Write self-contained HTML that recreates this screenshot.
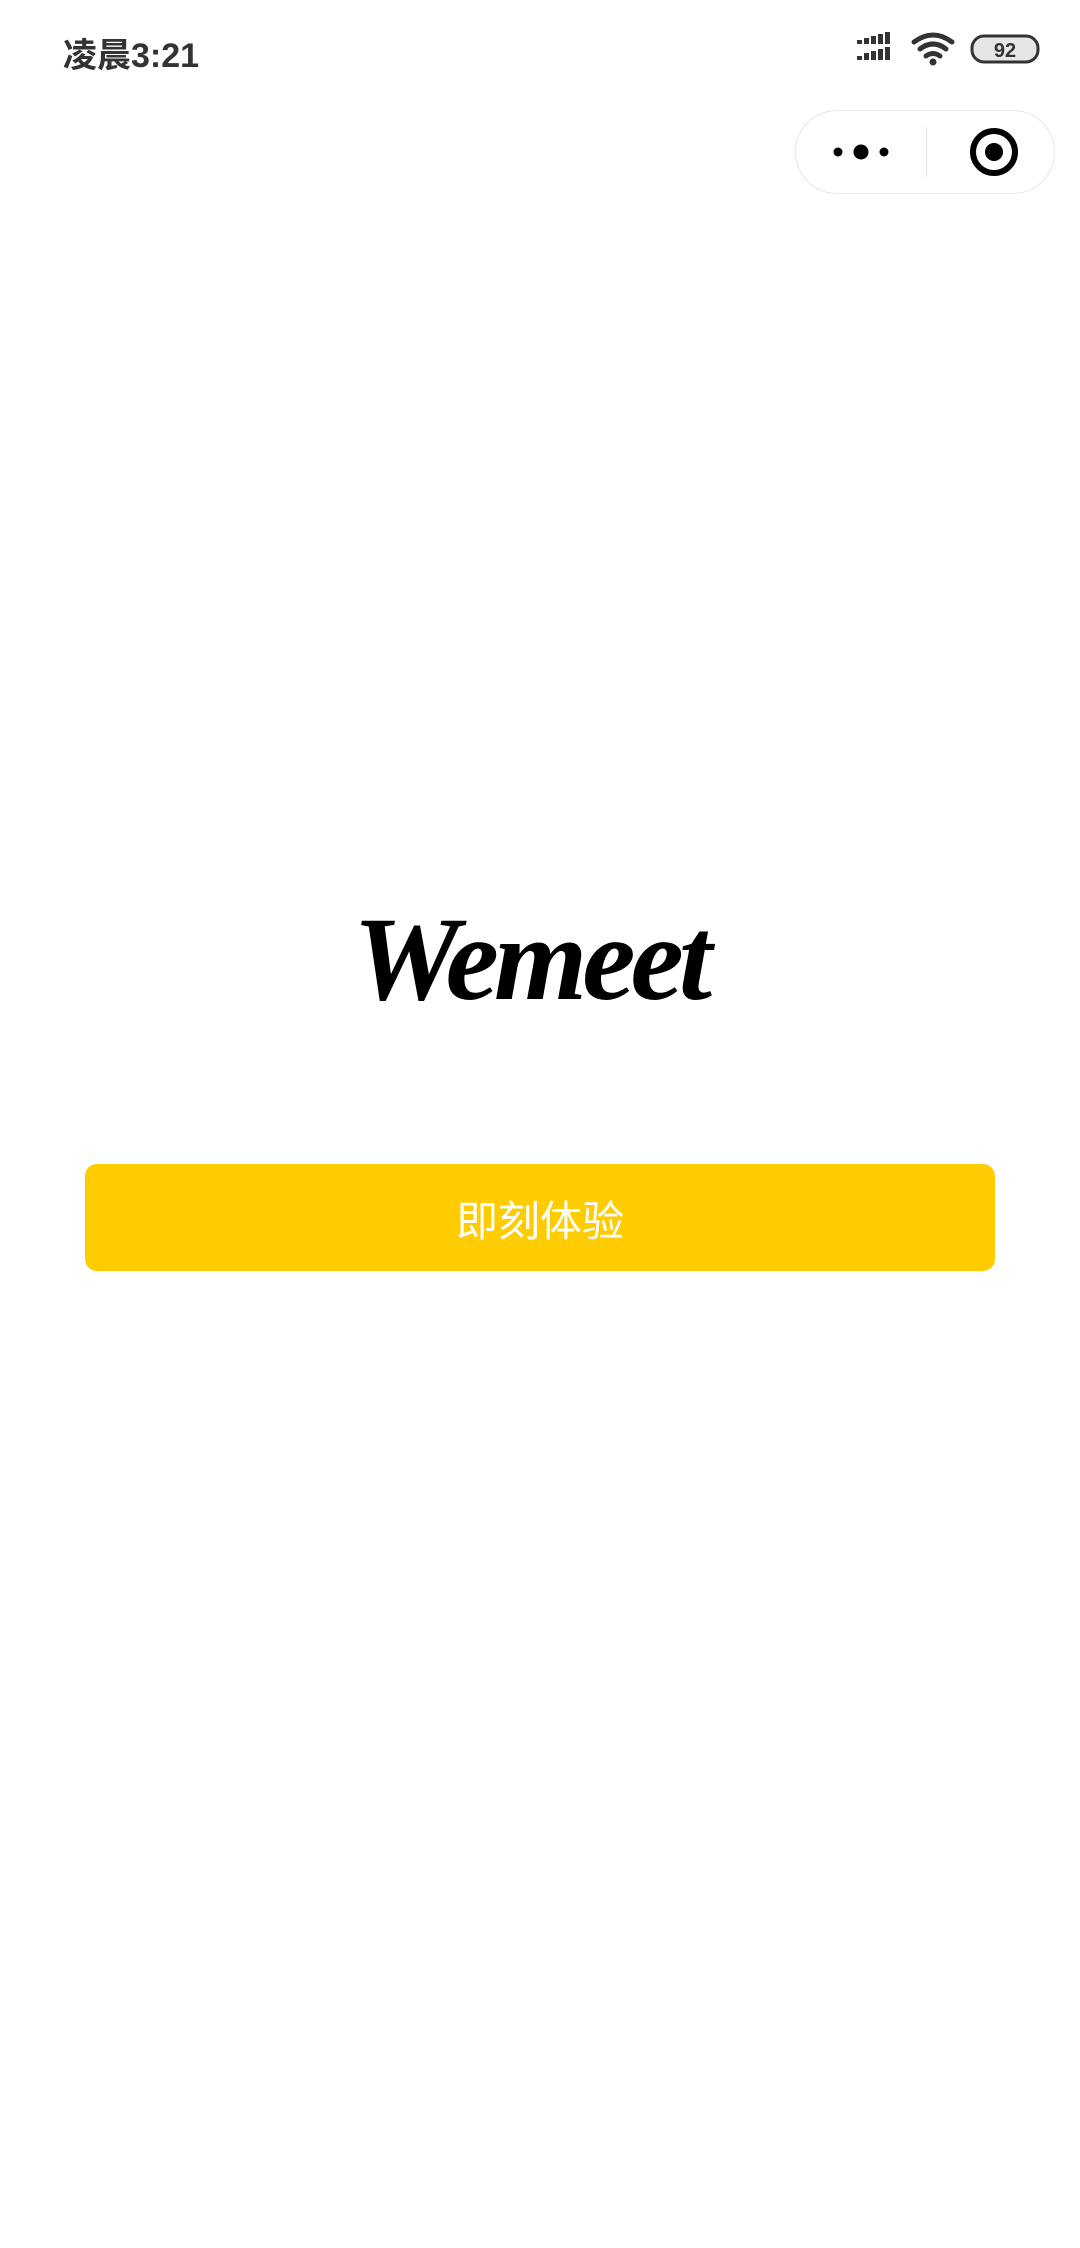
<!DOCTYPE html>
<html><head><meta charset="utf-8"><style>
body{margin:0;width:1080px;height:2248px;background:#fff;position:relative;overflow:hidden;font-family:"Liberation Sans","Noto Sans CJK SC",sans-serif}
.time{position:absolute;left:63px;top:28px;font-size:34px;font-weight:bold;color:#333}
.cap{position:absolute;left:795px;top:110px;width:258px;height:82px;border:1px solid #e6e6e6;border-radius:42px;background:#fff}
.div{position:absolute;left:130px;top:16px;width:1px;height:50px;background:#e5e5e5}
.logo{position:absolute;left:340px;top:890px;width:380px;text-align:center;font-family:"Liberation Serif",serif;font-style:italic;font-weight:bold;font-size:120px;letter-spacing:-5px;color:#000}
.btn{position:absolute;left:85px;top:1164px;width:910px;height:107px;background:#fecc00;border-radius:12px;color:#fff;font-size:42px;text-align:center;line-height:116px;font-family:"Liberation Sans","Noto Sans CJK SC",sans-serif}
</style></head><body>
<div class="time">凌晨3:21</div>
<svg style="position:absolute;left:855px;top:32px" width="190" height="36" viewBox="0 0 190 36">
<g fill="#333">
<rect x="2" y="8" width="5" height="4"/><rect x="9" y="6" width="5" height="6"/><rect x="16" y="4" width="5" height="8"/><rect x="23" y="2" width="5" height="10"/><rect x="30" y="0" width="5" height="12"/>
<rect x="2" y="24" width="5" height="4"/><rect x="9" y="21" width="5" height="7"/><rect x="16" y="19" width="5" height="9"/><rect x="23" y="17" width="5" height="11"/><rect x="30" y="15" width="5" height="13"/>
</g>
<g fill="none" stroke="#333" stroke-width="5" stroke-linecap="round">
<path d="M59 10 Q78 -4 97 10"/><path d="M65 17 Q78 7 91 17"/><path d="M71 24 Q78 19 85 24"/>
</g><circle cx="78" cy="30" r="3.5" fill="#333"/>
<rect x="117" y="4" width="66" height="26" rx="12" fill="#e6e6e6" stroke="#333" stroke-width="3"/>
<text x="150" y="25" font-size="20" font-weight="bold" text-anchor="middle" fill="#333" font-family="Liberation Sans">92</text>
</svg>
<div class="cap"><div class="div"></div>
<svg style="position:absolute;left:0;top:0" width="258" height="82">
<circle cx="42" cy="41" r="4.5" fill="#000"/><circle cx="65" cy="41" r="7.5" fill="#000"/><circle cx="88" cy="41" r="4.5" fill="#000"/>
<circle cx="198" cy="41" r="21" fill="none" stroke="#000" stroke-width="6"/><circle cx="198" cy="41" r="9" fill="#000"/>
</svg></div>
<div class="logo">Wemeet</div>
<div class="btn">即刻体验</div>
</body></html>
